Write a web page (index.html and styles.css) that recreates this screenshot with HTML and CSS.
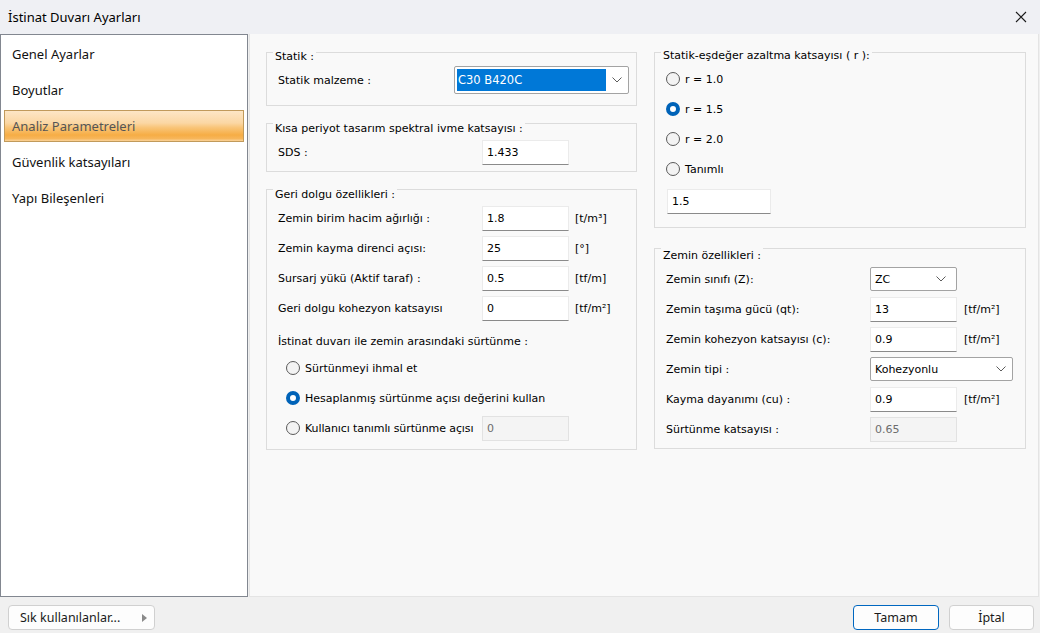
FILE: index.html
```html
<!DOCTYPE html>
<html lang="tr">
<head>
<meta charset="utf-8">
<title>İstinat Duvarı Ayarları</title>
<link rel="stylesheet" href="styles.css">
</head>
<body>
<div class="window">
  <header class="titlebar">
    <span class="title">İstinat Duvarı Ayarları</span>
    <button class="close" aria-label="Kapat">
      <svg width="12" height="12" viewBox="0 0 12 12"><path d="M1 1 L11 11 M11 1 L1 11" stroke="#1a1a1a" stroke-width="1.1" fill="none"/></svg>
    </button>
  </header>

  <div class="main">
    <nav class="nav">
      <ul>
        <li>Genel Ayarlar</li>
        <li>Boyutlar</li>
        <li class="active">Analiz Parametreleri</li>
        <li>Güvenlik katsayıları</li>
        <li>Yapı Bileşenleri</li>
      </ul>
    </nav>

    <section class="content">
      <div class="col col-left">
        <div class="group g-statik">
          <div class="legend">Statik :</div>
          <div class="row">
            <span class="label label-narrow">Statik malzeme :</span>
            <div class="combo combo-wide">
              <span class="combo-value selected">C30 B420C</span>
              <svg class="chev" width="10" height="6" viewBox="0 0 10 6"><path d="M0.5 0.5 L5 5 L9.5 0.5" stroke="#5c5c5c" fill="none"/></svg>
            </div>
          </div>
        </div>

        <div class="group g-sds">
          <div class="legend">Kısa periyot tasarım spektral ivme katsayısı :</div>
          <div class="row">
            <span class="label">SDS :</span>
            <div class="field">1.433</div>
          </div>
        </div>

        <div class="group g-geri">
          <div class="legend">Geri dolgu özellikleri :</div>
          <div class="row">
            <span class="label">Zemin birim hacim ağırlığı :</span>
            <div class="field">1.8</div>
            <span class="unit">[t/m³]</span>
          </div>
          <div class="row">
            <span class="label">Zemin kayma direnci açısı:</span>
            <div class="field">25</div>
            <span class="unit">[°]</span>
          </div>
          <div class="row">
            <span class="label">Sursarj yükü (Aktif taraf) :</span>
            <div class="field">0.5</div>
            <span class="unit">[tf/m]</span>
          </div>
          <div class="row">
            <span class="label">Geri dolgu kohezyon katsayısı</span>
            <div class="field">0</div>
            <span class="unit">[tf/m²]</span>
          </div>
          <div class="subhead">İstinat duvarı ile zemin arasındaki sürtünme :</div>
          <div class="row radio-row indent">
            <span class="radio"></span>
            <span class="radio-label">Sürtünmeyi ihmal et</span>
          </div>
          <div class="row radio-row indent">
            <span class="radio checked"></span>
            <span class="radio-label">Hesaplanmış sürtünme açısı değerini kullan</span>
          </div>
          <div class="row radio-row indent">
            <span class="radio"></span>
            <span class="radio-label fixed">Kullanıcı tanımlı sürtünme açısı</span>
            <div class="field disabled">0</div>
          </div>
        </div>
      </div>

      <div class="col col-right">
        <div class="group g-r">
          <div class="legend">Statik-eşdeğer azaltma katsayısı ( r ):</div>
          <div class="row radio-row">
            <span class="radio"></span>
            <span class="radio-label">r = 1.0</span>
          </div>
          <div class="row radio-row">
            <span class="radio checked"></span>
            <span class="radio-label">r = 1.5</span>
          </div>
          <div class="row radio-row">
            <span class="radio"></span>
            <span class="radio-label">r = 2.0</span>
          </div>
          <div class="row radio-row">
            <span class="radio"></span>
            <span class="radio-label">Tanımlı</span>
          </div>
          <div class="field field-r">1.5</div>
        </div>

        <div class="group g-zemin">
          <div class="legend">Zemin özellikleri :</div>
          <div class="row">
            <span class="label">Zemin sınıfı (Z):</span>
            <div class="combo combo-small">
              <span class="combo-value">ZC</span>
              <svg class="chev" width="10" height="6" viewBox="0 0 10 6"><path d="M0.5 0.5 L5 5 L9.5 0.5" stroke="#5c5c5c" fill="none"/></svg>
            </div>
          </div>
          <div class="row">
            <span class="label">Zemin taşıma gücü (qt):</span>
            <div class="field">13</div>
            <span class="unit">[tf/m²]</span>
          </div>
          <div class="row">
            <span class="label">Zemin kohezyon katsayısı (c):</span>
            <div class="field">0.9</div>
            <span class="unit">[tf/m²]</span>
          </div>
          <div class="row">
            <span class="label">Zemin tipi :</span>
            <div class="combo combo-mid">
              <span class="combo-value">Kohezyonlu</span>
              <svg class="chev" width="10" height="6" viewBox="0 0 10 6"><path d="M0.5 0.5 L5 5 L9.5 0.5" stroke="#5c5c5c" fill="none"/></svg>
            </div>
          </div>
          <div class="row">
            <span class="label">Kayma dayanımı (cu) :</span>
            <div class="field">0.9</div>
            <span class="unit">[tf/m²]</span>
          </div>
          <div class="row">
            <span class="label">Sürtünme katsayısı :</span>
            <div class="field disabled">0.65</div>
          </div>
        </div>
      </div>
    </section>
  </div>

  <footer class="footer">
    <button class="btn btn-fav">
      <span>Sık kullanılanlar...</span>
      <svg width="5" height="8" viewBox="0 0 5 8"><path d="M0 0 L5 4 L0 8 Z" fill="#8a8a8a"/></svg>
    </button>
    <div class="actions">
      <button class="btn btn-ok">Tamam</button>
      <button class="btn btn-cancel">İptal</button>
    </div>
  </footer>
</div>
</body>
</html>
```

FILE: styles.css
```css
* {
  box-sizing: border-box;
}

html, body {
  margin: 0;
  padding: 0;
}

body {
  width: 1040px;
  height: 633px;
  overflow: hidden;
  background: #f0f0f0;
  color: #000;
  font-family: "DejaVu Sans", "Liberation Sans", sans-serif;
  font-size: 11px;
}

.window {
  display: flex;
  flex-direction: column;
  height: 633px;
}

/* ---------- title bar ---------- */
.titlebar {
  height: 34px;
  flex: none;
  display: flex;
  align-items: center;
  justify-content: space-between;
  padding-left: 8px;
  background: #eff0f4;
}

.title {
  font-family: "Noto Sans", "Open Sans", sans-serif;
  font-size: 13px;
  color: #000;
}

.close {
  width: 38px;
  height: 34px;
  border: 0;
  padding: 0;
  background: transparent;
  display: flex;
  align-items: center;
  justify-content: center;
}

/* ---------- main area ---------- */
.main {
  display: flex;
  height: 563px;
  flex: none;
}

.nav {
  width: 248px;
  height: 563px;
  background: #fff;
  border: 1px solid #828790;
  font-family: "Noto Sans", "Open Sans", sans-serif;
  font-size: 13px;
}

.nav ul {
  list-style: none;
  margin: 0;
  padding: 1px 0 0;
}

.nav li {
  height: 36px;
  display: flex;
  align-items: center;
  padding-left: 11px;
  color: #111;
}

.nav li.active {
  height: 32px;
  margin: 2px 3px;
  padding-left: 7px;
  color: #555;
  border: 1px solid #c19a5b;
  background: linear-gradient(#fde6c6 0%, #fbd7a4 40%, #f9c579 55%, #f6ad45 80%, #f7b65a 92%, #fad39a 100%);
}

.content {
  width: 790px;
  height: 563px;
  margin-left: 1px;
  background: #f9f9f9;
  border: 1px solid #e4e4e4;
  border-top: 0;
  display: flex;
  gap: 17px;
  padding-left: 16px;
}

.col {
  display: flex;
  flex-direction: column;
}

.col-left {
  width: 371px;
  padding-top: 18px;
  gap: 17px;
}

.col-right {
  width: 372px;
  padding-top: 18px;
  gap: 20px;
}

/* ---------- group boxes ---------- */
.group {
  border: 1px solid #dcdcdc;
}

.legend {
  display: table;
  height: 16px;
  line-height: 16px;
  margin: -8px 0 0 6px;
  padding: 0 2px;
  background: #f9f9f9;
}

.g-statik { padding: 4px 0 10px; }
.g-sds { padding: 5px 0 4px; }
.g-geri { padding: 5px 0 6px; }
.g-r { padding: 3px 0 13px; }
.g-zemin { padding: 7px 0 4px; }

.row {
  height: 30px;
  display: flex;
  align-items: center;
  padding-left: 11px;
}

.label {
  width: 204px;
  flex: none;
  white-space: nowrap;
}

.label-narrow {
  width: 176px;
}

.subhead {
  height: 22px;
  margin-top: 8px;
  line-height: 22px;
  padding-left: 11px;
}

/* ---------- text fields ---------- */
.field {
  width: 87px;
  height: 25px;
  flex: none;
  display: flex;
  align-items: center;
  padding-left: 4px;
  background: #fff;
  border: 1px solid #ebebeb;
  border-bottom-color: #8a8a8a;
}

.field.disabled {
  background: #f4f4f4;
  border-color: #e2e2e2;
  color: #6d6d6d;
}

.field-r {
  width: 104px;
  margin: 5px 0 0 12px;
}

.unit {
  margin-left: 6px;
}

.g-zemin .unit {
  margin-left: 7px;
}

/* ---------- combo boxes ---------- */
.combo {
  flex: none;
  display: flex;
  align-items: center;
  justify-content: space-between;
  background: #fff;
  border: 1px solid #a3a3a3;
  border-radius: 2px;
}

.combo-wide {
  width: 175px;
  height: 28px;
  padding: 2px 0 2px 2px;
}

.combo-wide .chev {
  margin-right: 6px;
}

.combo-small {
  width: 87px;
  height: 24px;
  padding-left: 4px;
}

.combo-small .chev {
  margin-right: 10px;
}

.combo-mid {
  width: 143px;
  height: 24px;
  padding-left: 4px;
}

.combo-mid .chev {
  margin-right: 6px;
}

.combo-value.selected {
  width: 149px;
  height: 22px;
  line-height: 22px;
  padding-left: 1px;
  background: #0078d7;
  color: #fff;
  font-size: 11.5px;
}

/* ---------- radio buttons ---------- */
.radio-row {
  padding-left: 11px;
}

.radio-row.indent {
  padding-left: 19px;
}

.radio {
  width: 14px;
  height: 14px;
  flex: none;
  border-radius: 50%;
  border: 1px solid #5a5a5a;
  background: #f3f3f3;
}

.radio.checked {
  border: 4px solid #0063b8;
  background: #fff;
}

.radio-label {
  margin-left: 5px;
  white-space: nowrap;
}

.radio-label.fixed {
  width: 170px;
  flex: none;
  margin-right: 7px;
  letter-spacing: -0.1px;
}

/* ---------- footer ---------- */
.footer {
  height: 36px;
  flex: none;
  display: flex;
  justify-content: space-between;
  padding: 8px 6px 0 8px;
}

.btn {
  height: 25px;
  border: 1px solid #d0d0d0;
  border-radius: 4px;
  background: #fdfdfd;
  font-family: "Noto Sans", "Open Sans", sans-serif;
  font-size: 12.5px;
  color: #1a1a1a;
  padding: 0;
}

.btn-fav {
  width: 147px;
  display: flex;
  align-items: center;
  justify-content: space-between;
  padding: 0 7px 0 11px;
}

.actions {
  display: flex;
  gap: 10px;
}

.btn-ok {
  width: 86px;
  border-color: #0067c0;
}

.btn-cancel {
  width: 85px;
}
```
